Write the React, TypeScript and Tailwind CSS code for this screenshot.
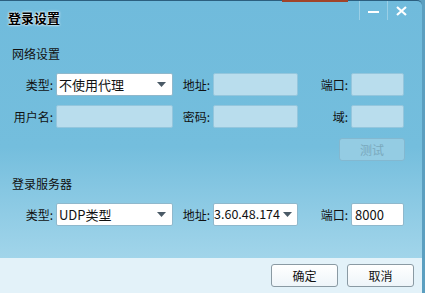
const font = { fontFamily: '"Microsoft YaHei", "Noto Sans CJK SC", "Liberation Sans", sans-serif' }

const Label = ({ text, w }: { text: string; w: string }) => (
  <div className={`${w} text-right text-[12px] text-[#111] leading-none pr-[3px]`}>{text}</div>
)

const Input = ({ w, value }: { w: string; value?: string }) => (
  <div
    className={`${w} h-[23px] rounded-[2px] border ${
      value !== undefined ? 'bg-white border-[#8fb8cc]' : 'bg-[#b9dded] border-[#94c6dd]'
    } flex items-center px-[3px] text-[13px] text-[#111]`}
  >
    {value}
  </div>
)

const Select = ({ w, value, clip }: { w: string; value: string; clip?: boolean }) => (
  <div
    className={`${w} h-[23px] rounded-[2px] border border-[#8fb8cc] bg-white flex items-center ${
      clip ? 'pl-0 pr-[5px]' : 'pl-[2px] pr-[6px]'
    } overflow-hidden`}
  >
    <div
      className={`flex-1 flex overflow-hidden whitespace-nowrap text-[#111] ${
        clip ? 'justify-end text-[12.5px]' : 'text-[13px]'
      }`}
    >
      <span className="shrink-0">{value}</span>
    </div>
    <svg width="9" height="5" viewBox="0 0 9 5" className={`${clip ? 'ml-[3px]' : 'ml-[4px]'} shrink-0`}>
      <path d="M0 0h9L4.5 5z" fill="#4a5a66" />
    </svg>
  </div>
)

export default function App() {
  return (
    <div style={font} className="w-[425px] h-[293px] overflow-hidden bg-[#5b9fc0]">
      <div className="relative w-[422px] h-[293px] border-t border-[#2c5f7f] rounded-tr-[5px] flex flex-col bg-gradient-to-b from-[#70bbdc] via-[#74bedd] to-[#afdcee]">
        <div className="absolute top-[-1px] left-[282px] w-[66px] h-[2px] bg-[#a1442a]" />
        {/* title bar */}
        <div className="h-[30px] flex items-start justify-between">
          <div className="pl-[8px] pt-[7px] text-[13px] font-bold text-black [text-shadow:0_0_3px_#fff,0_0_2px_#fff]">登录设置</div>
          <div className="flex h-[19px] mr-[7px]">
            <div className="w-[28px] border-l border-[#9acfe6] flex items-center justify-center">
              <div className="w-[11px] h-[2px] bg-white mt-[3px]" />
            </div>
            <div className="w-[28px] border-l border-[#9acfe6] flex items-center justify-center">
              <svg width="11" height="10" viewBox="0 0 11 10">
                <path d="M1 1l9 8M10 1l-9 8" stroke="#fff" strokeWidth="2.2" />
              </svg>
            </div>
          </div>
        </div>

        <div className="flex-1 flex flex-col">
          <div className="pl-[12px] pt-[17px] text-[12px] text-[#111] leading-none">网络设置</div>

          <div className="mt-[13px] flex items-center">
            <Label text="类型:" w="w-[56px]" />
            <Select w="w-[117px]" value="不使用代理" />
            <Label text="地址:" w="w-[40px]" />
            <Input w="w-[85px]" />
            <Label text="端口:" w="w-[53px]" />
            <Input w="w-[53px]" />
          </div>

          <div className="mt-[9px] flex items-center">
            <Label text="用户名:" w="w-[56px]" />
            <Input w="w-[117px]" />
            <Label text="密码:" w="w-[40px]" />
            <Input w="w-[85px]" />
            <Label text="域:" w="w-[53px]" />
            <Input w="w-[53px]" />
          </div>

          <div className="mt-[10px] flex justify-end pr-[17px]">
            <div className="w-[66px] h-[23px] rounded-[3px] border border-[#83b8d0] bg-[#94cce3] flex items-center justify-center text-[12px] text-[#7aa9bd]">
              测试
            </div>
          </div>

          <div className="pl-[12px] pt-[17px] text-[12px] text-[#111] leading-none">登录服务器</div>

          <div className="mt-[13px] flex items-center">
            <Label text="类型:" w="w-[56px]" />
            <Select w="w-[117px]" value="UDP类型" />
            <Label text="地址:" w="w-[40px]" />
            <Select w="w-[85px]" value="3.60.48.174" clip />
            <Label text="端口:" w="w-[53px]" />
            <Input w="w-[53px]" value="8000" />
          </div>
        </div>

        {/* footer */}
        <div className="h-[35px] bg-[#e3f2f9] flex items-center justify-end gap-[9px] pr-[8px]">
          <button className="w-[67px] h-[23px] rounded-[3px] border border-[#8a9aa3] bg-gradient-to-b from-white to-[#eef5f9] text-[12px] text-[#111]">
            确定
          </button>
          <button className="w-[67px] h-[23px] rounded-[3px] border border-[#8a9aa3] bg-gradient-to-b from-white to-[#eef5f9] text-[12px] text-[#111]">
            取消
          </button>
        </div>
      </div>
    </div>
  )
}
